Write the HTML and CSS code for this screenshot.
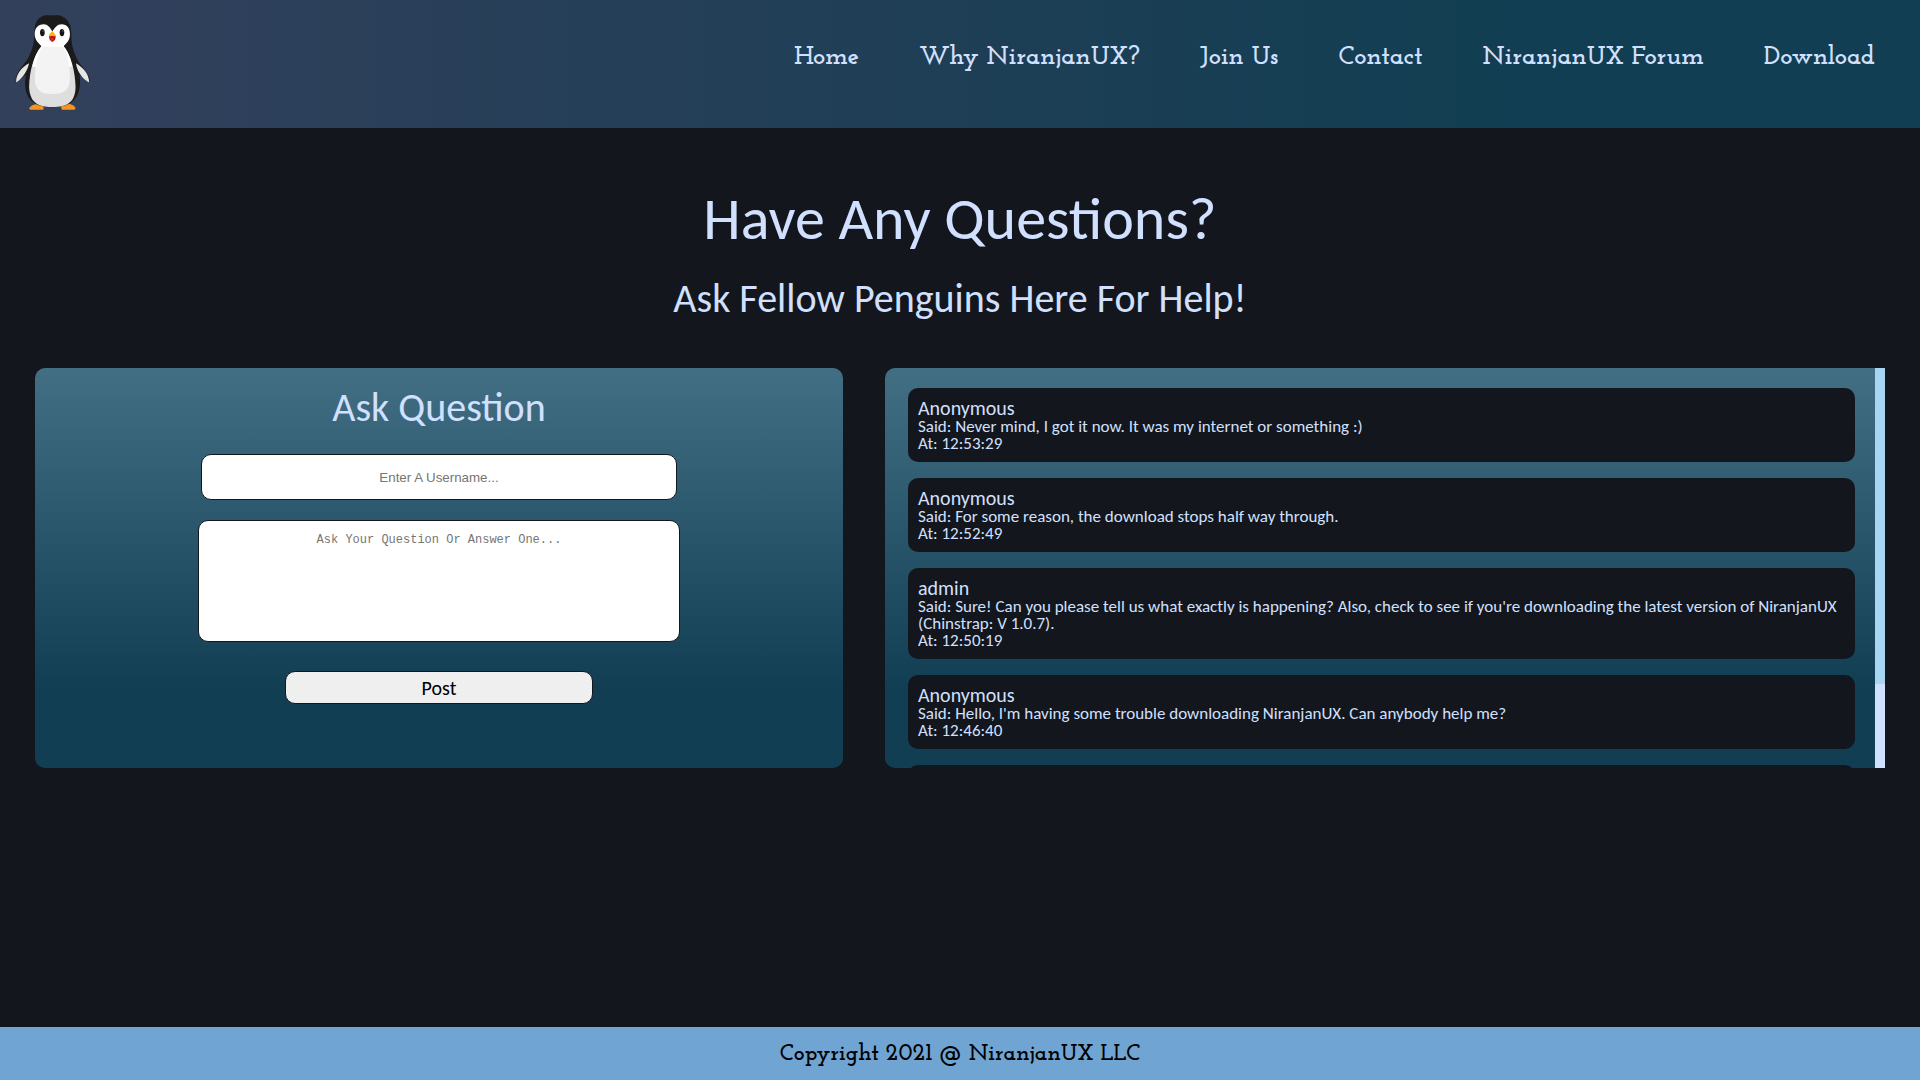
FILE: index.html
```html
<!DOCTYPE html>
<html lang="en">
<head>
<meta charset="utf-8">
<title>NiranjanUX Forum</title>
<link rel="stylesheet" href="styles.css">
</head>
<body>
<header class="site-header">
  <a class="logo" href="#" aria-label="NiranjanUX">
    <svg class="penguin" viewBox="45 44 225 286" aria-hidden="true">
      <path fill="#f7941d" d="M87 324q8-10 22-12l22 6-1 11H90zM182 318l24-7q16 3 21 13l-3 5h-38z"/>
      <path fill="#1b1b1b" d="M135 45h44q34 12 35 50c0 40 5 52 17 81 8 18 30 36 38 58v13l-30-23c6 48-4 98-82 98s-88-50-80-98l-30 23v-13c5-24 30-45 39-64 12-26 17-40 17-75 0-32 13-44 32-50z"/>
      <path fill="#e5e5e5" d="M87 189c-4 20-18 45-39 58-1-26 17-46 39-58zM228 189c20 12 40 30 40 58-20-10-36-32-40-58z"/>
      <path fill="#dedede" d="M124 138c-22 28-36 72-37 122 2 46 24 61 70 61s69-15 70-61c-2-50-14-94-36-122z"/>
      <path fill="#fff" d="M131 72c-17 0-27 12-27 29 0 18 10 25 20 37-14 16-22 36-27 60l15 4h90l15-4c-5-24-12-44-26-60 11-12 19-19 19-37 0-17-9-29-25-29-14 0-20 10-28 22-6-12-14-22-26-22z"/>
      <path fill="#f3f3f3" d="M127 140c-14 20-22 50-23 96 2 34 18 46 53 46s52-12 53-46c-1-46-7-76-21-96z"/>
      <ellipse cx="127" cy="97" rx="7" ry="11" fill="#161616"/>
      <ellipse cx="186" cy="97" rx="7" ry="11" fill="#161616"/>
      <circle cx="129" cy="92" r="2" fill="#777"/>
      <circle cx="188" cy="92" r="2" fill="#777"/>
      <path fill="#b5121b" d="M147 106h20q1 16-10 19-10-3-10-19z"/>
      <path fill="#e0362c" d="M154 113h6v8h-6z"/>
      <path fill="#fdb515" d="M157 93q7 5 10 13l-4 3-6-3-6 3-5-3q3-8 11-13z"/>
    </svg>
  </a>
  <nav class="nav">
    <a href="#">Home</a>
    <a href="#">Why NiranjanUX?</a>
    <a href="#">Join Us</a>
    <a href="#">Contact</a>
    <a href="#">NiranjanUX Forum</a>
    <a href="#">Download</a>
  </nav>
</header>
<main class="main">
  <h1 class="title">Have Any Questions?</h1>
  <h2 class="subtitle">Ask Fellow Penguins Here For Help!</h2>
  <div class="panels">
    <form class="panel ask">
      <h2 class="ask-title">Ask Question</h2>
      <input class="field username" type="text" placeholder="Enter A Username..." aria-label="Username">
      <textarea class="field question" placeholder="Ask Your Question Or Answer One..." aria-label="Question"></textarea>
      <button class="post" type="button">Post</button>
    </form>
    <section class="panel feed">
      <div class="messages">
        <article class="message">
          <h3>Anonymous</h3>
          <p>Said: Never mind, I got it now. It was my internet or something :)</p>
          <p>At: 12:53:29</p>
        </article>
        <article class="message">
          <h3>Anonymous</h3>
          <p>Said: For some reason, the download stops half way through.</p>
          <p>At: 12:52:49</p>
        </article>
        <article class="message">
          <h3>admin</h3>
          <p>Said: Sure! Can you please tell us what exactly is happening? Also, check to see if you're downloading the latest version of NiranjanUX (Chinstrap: V 1.0.7).</p>
          <p>At: 12:50:19</p>
        </article>
        <article class="message">
          <h3>Anonymous</h3>
          <p>Said: Hello, I'm having some trouble downloading NiranjanUX. Can anybody help me?</p>
          <p>At: 12:46:40</p>
        </article>
        <article class="message"></article>
      </div>
      <div class="scrollbar" aria-hidden="true"><div class="thumb"></div></div>
    </section>
  </div>
</main>
<footer class="footer">Copyright 2021 @ NiranjanUX LLC</footer>
</body>
</html>
```
FILE: styles.css
```css
* { box-sizing: border-box; margin: 0; padding: 0; }

body {
  min-height: 100vh;
  display: flex;
  flex-direction: column;
  background: #13161d;
  color: #d1e0ff;
  font-family: Calibri, Carlito, Lato, sans-serif;
}

.site-header {
  display: flex;
  justify-content: space-between;
  align-items: flex-start;
  padding: 15px 45px 18px 15px;
  background: linear-gradient(to right, #33405c, #113e52 80%);
}

.logo, .penguin { display: block; }
.penguin { width: 75px; height: 95px; }

.nav {
  display: flex;
  gap: 60px;
  padding-top: 29px;
  font: bold 26px/28px "Josefin Slab", "DejaVu Serif Condensed", "DejaVu Serif", serif;
}
.nav a { color: #d1e0ff; text-decoration: none; white-space: nowrap; }

.main { flex: 1; padding: 55px 35px; }

.title { font-size: 60px; line-height: 72px; font-weight: 400; text-align: center; }
.subtitle { margin-top: 20px; font-size: 40px; line-height: 48px; font-weight: 400; text-align: center; }

.panels {
  display: grid;
  grid-template-columns: 808fr 1000fr;
  gap: 42px;
  margin-top: 45px;
}

.panel {
  height: 400px;
  border-radius: 10px;
  background: linear-gradient(#436f84, #113e52 80%);
}

.ask { display: flex; flex-direction: column; align-items: center; padding-top: 16px; }
.ask-title { font-size: 40px; line-height: 48px; font-weight: 400; }

.field {
  border: 1px solid #13161d;
  border-radius: 10px;
  background: #fff;
  color: #000;
  text-align: center;
  resize: none;
}
.field::placeholder { color: #757575; }
.username { width: 59%; height: 46px; margin-top: 22px; font-family: "Liberation Sans", sans-serif; }
.question { width: 60%; max-width: 482px; height: 122px; margin-top: 20px; padding: 11px; font: 12px/16px "Liberation Mono", monospace; }

.post {
  width: 38%;
  height: 33px;
  margin-top: 29px;
  border: 1px solid #13161d;
  border-radius: 10px;
  background: #efefef;
  color: #000;
  font: 20px Calibri, Carlito, Lato, sans-serif;
}

.feed { display: flex; border-radius: 10px 0 0 10px; overflow: hidden; }

.messages {
  flex: 1;
  display: flex;
  flex-direction: column;
  gap: 16px;
  padding: 20px 20px 20px 23px;
  overflow-y: auto;
  scrollbar-width: none;
}

.scrollbar { width: 10px; background: #d1e0ff; }
.thumb { height: 79%; background: #a8d5f2; }

.message { flex: none; padding: 10px; border-radius: 10px; background: #13161d; }
.message:empty { height: 91px; }
.message h3 { font-size: 20px; line-height: 20px; font-weight: 400; }
.message p { font-size: 17px; line-height: 17px; }

.footer {
  padding: 13px 12px 11px;
  background: #70a5d3;
  color: #000;
  text-align: center;
  font: bold 23px/29px "Josefin Slab", "DejaVu Serif Condensed", "DejaVu Serif", serif;
}
```
